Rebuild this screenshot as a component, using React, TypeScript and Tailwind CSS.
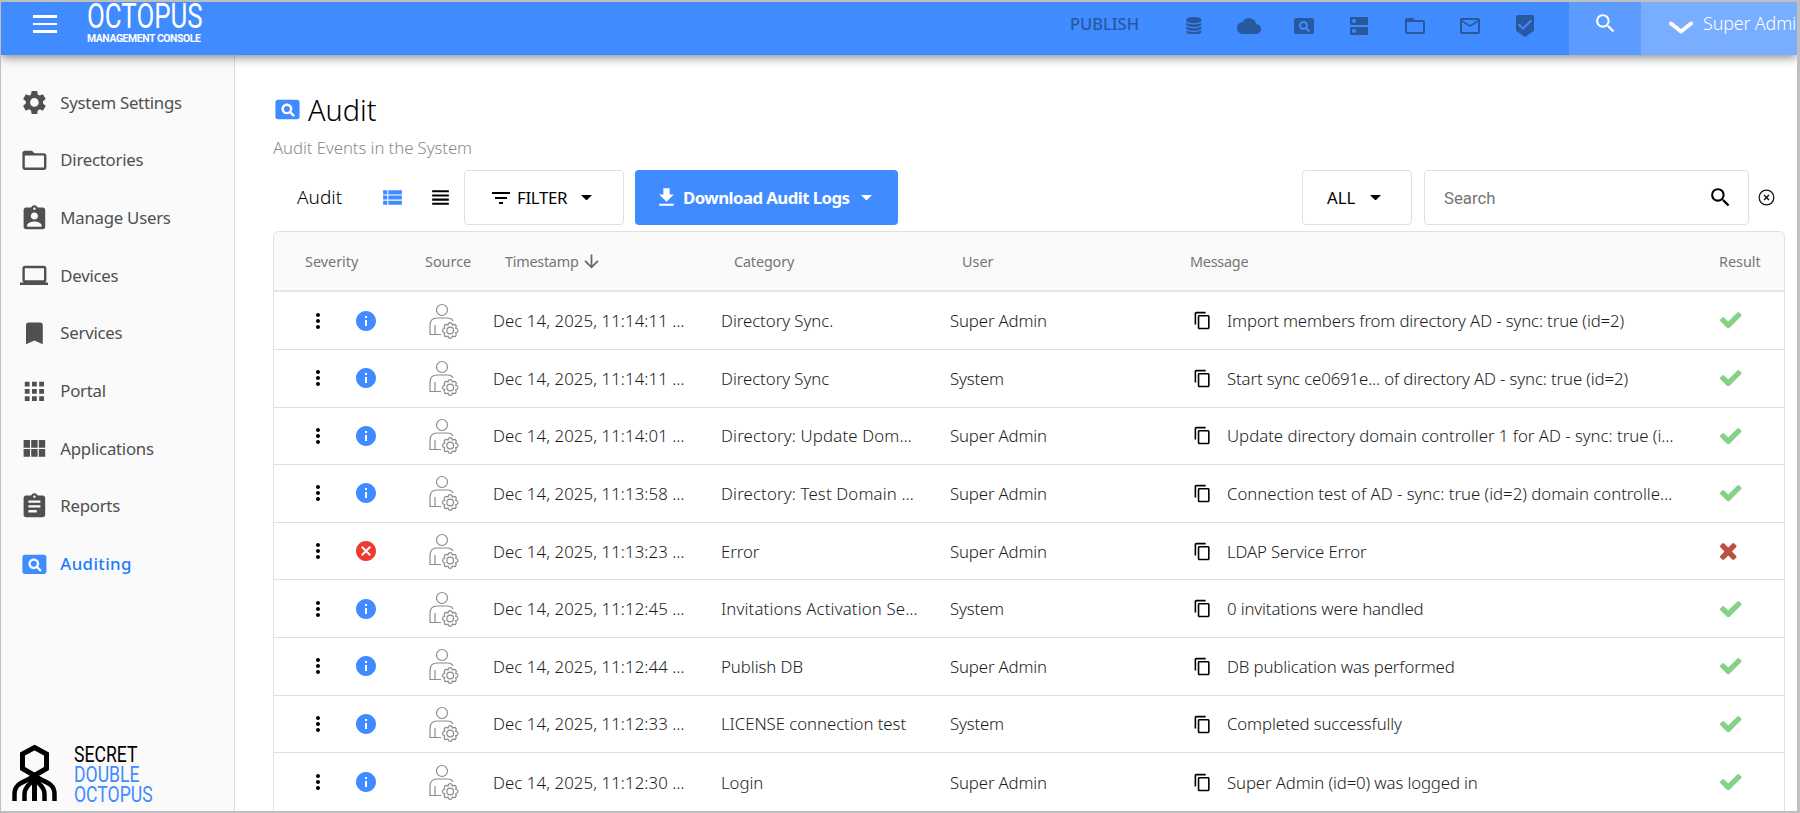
import type { ReactNode } from 'react';
import {
  MdApps,
  MdArrowDownward,
  MdAssignment,
  MdAssignmentInd,
  MdBeenhere,
  MdBookmark,
  MdCancel,
  MdCloud,
  MdContentCopy,
  MdDns,
  MdFileDownload,
  MdFilterList,
  MdFolderOpen,
  MdInfo,
  MdLaptop,
  MdMailOutline,
  MdMoreVert,
  MdPageview,
  MdSearch,
  MdSettings,
  MdViewHeadline,
  MdViewList,
  MdViewModule,
} from 'react-icons/md';

const NAV = [
  { label: 'System Settings', icon: MdSettings },
  { label: 'Directories', icon: MdFolderOpen },
  { label: 'Manage Users', icon: MdAssignmentInd },
  { label: 'Devices', icon: MdLaptop },
  { label: 'Services', icon: MdBookmark },
  { label: 'Portal', icon: MdApps },
  { label: 'Applications', icon: MdViewModule },
  { label: 'Reports', icon: MdAssignment },
  { label: 'Auditing', icon: MdPageview, active: true },
];

const EVENTS = [
  { time: '11:14:11', category: 'Directory Sync.', user: 'Super Admin', message: 'Import members from directory AD - sync: true (id=2)' },
  { time: '11:14:11', category: 'Directory Sync', user: 'System', message: 'Start sync ce0691e... of directory AD - sync: true (id=2)' },
  { time: '11:14:01', category: 'Directory: Update Dom…', user: 'Super Admin', message: 'Update directory domain controller 1 for AD - sync: true (i…' },
  { time: '11:13:58', category: 'Directory: Test Domain …', user: 'Super Admin', message: 'Connection test of AD - sync: true (id=2) domain controlle…' },
  { time: '11:13:23', category: 'Error', user: 'Super Admin', message: 'LDAP Service Error', failed: true },
  { time: '11:12:45', category: 'Invitations Activation Se…', user: 'System', message: '0 invitations were handled' },
  { time: '11:12:44', category: 'Publish DB', user: 'Super Admin', message: 'DB publication was performed' },
  { time: '11:12:33', category: 'LICENSE connection test', user: 'System', message: 'Completed successfully' },
  { time: '11:12:30', category: 'Login', user: 'Super Admin', message: 'Super Admin (id=0) was logged in' },
];

const COLS = 'grid grid-cols-[151px_68px_228px_229px_240px_529px_1fr] items-center';

function DatabaseIcon() {
  return (
    <svg viewBox="0 0 1792 1792" className="size-[17.5px]" fill="currentColor">
      <path d="M896 768q237 0 443-43t325-127v170q0 69-103 128t-280 93.5-385 34.5-385-34.5-280-93.5-103-128v-170q119 84 325 127t443 43zm0 768q237 0 443-43t325-127v170q0 69-103 128t-280 93.5-385 34.5-385-34.5-280-93.5-103-128v-170q119 84 325 127t443 43zm0-384q237 0 443-43t325-127v170q0 69-103 128t-280 93.5-385 34.5-385-34.5-280-93.5-103-128v-170q119 84 325 127t443 43zm0-1152q208 0 385 34.5t280 93.5 103 128v128q0 69-103 128t-280 93.5-385 34.5-385-34.5-280-93.5-103-128v-128q0-69 103-128t280-93.5 385-34.5z" />
    </svg>
  );
}

function CheckIcon() {
  return (
    <svg viewBox="121 334 1550 1188" className="h-[16.500px] w-[21.500px]" preserveAspectRatio="none" fill="#85d285">
      <path d="M1671 566q0 40-28 68l-724 724-136 136q-28 28-68 28t-68-28l-136-136-362-362q-28-28-28-68t28-68l136-136q28-28 68-28t68 28l294 295 656-657q28-28 68-28t68 28l136 136q28 28 28 68z" />
    </svg>
  );
}

function TimesIcon() {
  return (
    <svg viewBox="302 366 1188 1188" className="h-[17px] w-[16.500px]" preserveAspectRatio="none" fill="#bb5140">
      <path d="M1490 1322q0 40-28 68l-136 136q-28 28-68 28t-68-28l-294-294-294 294q-28 28-68 28t-68-28l-136-136q-28-28-28-68t28-68l294-294-294-294q-28-28-28-68t28-68l136-136q28-28 68-28t68 28l294 294 294-294q28-28 68-28t68 28l136 136q28 28 28 68t-28 68l-294 294 294 294q28 28 28 68z" />
    </svg>
  );
}

// Person with a small gear in the corner
function SourceIcon() {
  return (
    <svg viewBox="0 0 32 36" className="h-9 w-8" fill="none" stroke="#8c8c8c" strokeWidth="1.2">
      <circle cx="14" cy="7" r="5.5" />
      <path d="M13 31.5H2V22.500C2 17.500 4.500 15 9 15h10.500c2.500 0 4.500 1 5.500 3" />
      <path d="M7 22v9.500" />
      <circle cx="22.200" cy="27.500" r="3.300" />
      <path d="M20.500 20.500q1.700-1.600 3.400 0l.5 1.500 1.600-.6q2.200.2 2.300 2.300l-.7 1.600 1.700.7q1.200 1.500 0 3l-1.700.8.7 1.600q-.2 2.100-2.300 2.300l-1.600-.7-.7 1.700q-1.500 1.200-3 0l-.7-1.700-1.600.7q-2.100-.2-2.300-2.300l.7-1.600-1.700-.8q-1.200-1.500 0-3l1.700-.7-.7-1.600q.2-2.100 2.300-2.300l1.600.6z" />
    </svg>
  );
}

function Caret() {
  return (
    <svg viewBox="0 0 12 6" className="h-[5.500px] w-[11px] shrink-0" fill="currentColor">
      <path d="M0 0h12L6 6z" />
    </svg>
  );
}

function OctopusMark() {
  return (
    <svg viewBox="0 0 45 57" className="h-[57px] w-[45px]" fill="none" stroke="#000" strokeWidth="4.500">
      <path d="M22.500 3.500 34.500 10v14.500L22.500 31.500l-12-7V10z" strokeWidth="5" />
      <path d="M22.500 29v28" strokeWidth="5" />
      <path d="M22.500 31C17 38 2.500 37 2.500 50v7M22.500 31C28 38 42.500 37 42.500 50v7" />
      <path d="M22.500 34C19 40 12.500 42 12.500 50v7M22.500 34C26 40 32.500 42 32.500 50v7" />
    </svg>
  );
}

function TopSlot({ children }: { children: ReactNode }) {
  return <div className="flex w-[55.300px] items-center justify-center pt-[2px]">{children}</div>;
}

function TopBar() {
  return (
    <header className="relative z-10 flex h-[53px] shrink-0 bg-[#3f8bff] shadow-[0_2px_10px_rgba(0,0,0,0.5)]">
      <div className="flex w-[86px] flex-col gap-[5px] pt-[13px] pl-8">
        <div className="h-[2.500px] w-6 bg-white" />
        <div className="h-[2.500px] w-6 bg-white" />
        <div className="h-[2.500px] w-6 bg-white" />
      </div>
      <div className="w-[200px] font-[Roboto] text-white">
        <div className="h-[30px] origin-left scale-x-[0.74] text-[35px] leading-[30px] font-normal whitespace-nowrap">
          OCTOPUS
        </div>
        <div className="text-[10.400px] leading-[14px] font-bold tracking-[-0.400px] whitespace-nowrap">MANAGEMENT CONSOLE</div>
      </div>
      <div className="ml-auto flex h-[45px] items-center text-[#28599f]">
        <span className="w-[96px] text-[16.500px] font-medium">PUBLISH</span>
        <TopSlot><DatabaseIcon /></TopSlot>
        <TopSlot><MdCloud size={24} /></TopSlot>
        <TopSlot><MdPageview size={24} /></TopSlot>
        <TopSlot><MdDns size={24} /></TopSlot>
        <TopSlot><MdFolderOpen size={24} /></TopSlot>
        <TopSlot><MdMailOutline size={24} /></TopSlot>
        <TopSlot><MdBeenhere size={24} /></TopSlot>
        <div className="w-[16px]" />
      </div>
      <div className="flex w-[72px] justify-center bg-[#5c9bff] pt-[9px] text-white">
        <MdSearch size={25} />
      </div>
      <div className="flex w-[156px] overflow-hidden bg-[#79adff] pl-7 text-white">
        <svg viewBox="0 0 24 14" className="mt-[19px] h-[14px] w-6 shrink-0" fill="none" stroke="#fff" strokeWidth="4">
          <path d="M2 2.500l10 8 10-8" strokeLinecap="round" strokeLinejoin="round" />
        </svg>
        <span className="ml-[10px] text-[18px] leading-[43px] font-light tracking-[-0.200px] whitespace-nowrap">Super Admin</span>
      </div>
    </header>
  );
}

function Sidebar() {
  return (
    <aside className="flex w-[234px] shrink-0 flex-col border-r border-[#dedede] bg-[#fafafa]">
      <nav className="pt-[19px]">
        {NAV.map(({ label, icon: Icon, active }) => (
          <div
            key={label}
            className={`flex h-[57.650px] items-center pl-[18.500px] text-[16.800px] ${
              active ? 'font-medium tracking-[0.400px] text-[#1f7bff]' : 'tracking-[-0.250px] text-[#505050]'
            }`}
          >
            <Icon size={28.8} className={active ? 'text-[#3f8bff]' : ''} />
            <span className="ml-[12px] -mt-px whitespace-nowrap">{label}</span>
          </div>
        ))}
      </nav>
      <div className="mt-auto flex pb-[6px] pl-[11px]">
        <OctopusMark />
        <div className="ml-[17px] flex origin-left scale-x-[0.8] flex-col pt-px font-[Roboto] text-[22px] leading-5 whitespace-nowrap text-[#3f8bff]">
          <span className="text-black">SECRET</span>
          <span>DOUBLE</span>
          <span>OCTOPUS</span>
        </div>
      </div>
    </aside>
  );
}

function Toolbar() {
  return (
    <div className="flex h-[55px] items-center">
      <span className="ml-[24px] w-[83px] text-[19px] font-light">Audit</span>
      <MdViewList size={25} className="text-[#3f8bff]" />
      <MdViewHeadline size={25} className="ml-[23px]" />
      <div className="ml-[11px] flex h-full w-[160px] items-center rounded-[4px] border border-[#e0e0e0] pl-[24px]">
        <MdFilterList size={24} />
        <span className="ml-[4px] w-[64px] text-[16.800px] tracking-[-0.300px]">FILTER</span>
        <Caret />
      </div>
      <div className="ml-[11px] flex h-full w-[263px] items-center rounded-[4px] bg-[#3f8bff] pl-[19px] text-white">
        <MdFileDownload size={25} className="shrink-0" />
        <span className="ml-[4px] w-[178px] text-[16.800px] font-bold tracking-[-0.550px] whitespace-nowrap">
          Download Audit Logs
        </span>
        <Caret />
      </div>
      <div className="ml-auto flex h-full w-[110px] items-center rounded-[4px] border border-[#e0e0e0] pl-6">
        <span className="w-[43px] text-[16.800px]">ALL</span>
        <Caret />
      </div>
      <div className="ml-3 flex h-full w-[325px] items-center justify-between rounded-[4px] border border-[#e0e0e0] pr-[15px] pl-[19px]">
        <span className="pt-[2px] font-[Roboto] text-[16.800px] text-[#757575]">Search</span>
        <MdSearch size={25} />
      </div>
      <svg viewBox="0 0 18 18" className="mr-[10px] ml-[9px] size-[17px]" fill="none" stroke="#111" strokeWidth="1.300">
        <circle cx="9" cy="9" r="7.800" />
        <path d="M6.400 6.400l5.200 5.200M11.600 6.400l-5.200 5.200" strokeWidth="1.500" />
      </svg>
    </div>
  );
}

function AuditTable() {
  return (
    <div className="mt-[6px] flex-1 rounded-t-[6px] border border-b-0 border-[#e0e0e0]">
      <div className={`${COLS} h-[60.500px] rounded-t-[5px] border-b-2 border-[#e6e6e6] bg-[#fafafa] pt-[2px] text-[14.400px] text-[#757575]`}>
        <span className="pl-[31px]">Severity</span>
        <span>Source</span>
        <span className="flex items-center gap-[2px] pl-[12px] tracking-[-0.250px]">
          Timestamp <MdArrowDownward size={21} className="text-[#666]" />
        </span>
        <span className="pl-[13px] tracking-[-0.150px]">Category</span>
        <span className="pl-[12px]">User</span>
        <span className="tracking-[-0.250px]">Message</span>
        <span>Result</span>
      </div>
      {EVENTS.map((e, i) => (
        <div
          key={i}
          className={`${COLS} h-[57.650px] border-b border-[#e0e0e0] text-[16.800px] font-light whitespace-nowrap text-[#1c1c1c] last:border-b-0`}
        >
          <div className="flex items-center pl-[31.500px] text-black">
            <MdMoreVert size={24} />
            {e.failed ? (
              <MdCancel size={24} className="ml-[24px] text-[#f03a2e]" />
            ) : (
              <MdInfo size={24} className="ml-[24px] text-[#3f8bff]" />
            )}
          </div>
          <div className="pl-[3px]"><SourceIcon /></div>
          <span className="tracking-[0.080px]">Dec 14, 2025, {e.time} …</span>
          <span className={e.category.endsWith('…') ? 'tracking-[0.150px]' : 'tracking-[-0.050px]'}>{e.category}</span>
          <span className="tracking-[-0.150px]">{e.user}</span>
          <div className="flex items-center text-black">
            <MdContentCopy size={19} className="ml-[3px]" />
            <span
              className={`ml-[15px] text-[#1c1c1c] ${
                e.message.endsWith('…') ? 'tracking-[-0.020px]' : 'tracking-[-0.130px]'
              }`}
            >
              {e.message}
            </span>
          </div>
          <div className="pl-[1px]">{e.failed ? <TimesIcon /> : <CheckIcon />}</div>
        </div>
      ))}
    </div>
  );
}

export default function App() {
  return (
    <div className="flex h-[813px] w-[1800px] flex-col overflow-hidden border-t-2 border-r-[3px] border-b-2 border-l border-[#bfbfbf] bg-white font-['Noto_Sans',sans-serif] text-black">
      <TopBar />
      <div className="flex min-h-0 flex-1">
        <Sidebar />
        <main className="flex min-w-0 flex-1 flex-col overflow-hidden pr-[12px] pl-[38px]">
          <div className="mt-[33px] flex h-[44px] items-center">
            <MdPageview size={29} className="text-[#3f8bff]" />
            <h1 className="-mt-px ml-[6px] text-[28.800px] font-light">Audit</h1>
          </div>
          <p className="mt-[4px] mb-[11px] h-[24px] text-[16.800px] leading-[25px] font-light tracking-[-0.080px] text-[#8c8c8c]">
            Audit Events in the System
          </p>
          <Toolbar />
          <AuditTable />
        </main>
      </div>
    </div>
  );
}
